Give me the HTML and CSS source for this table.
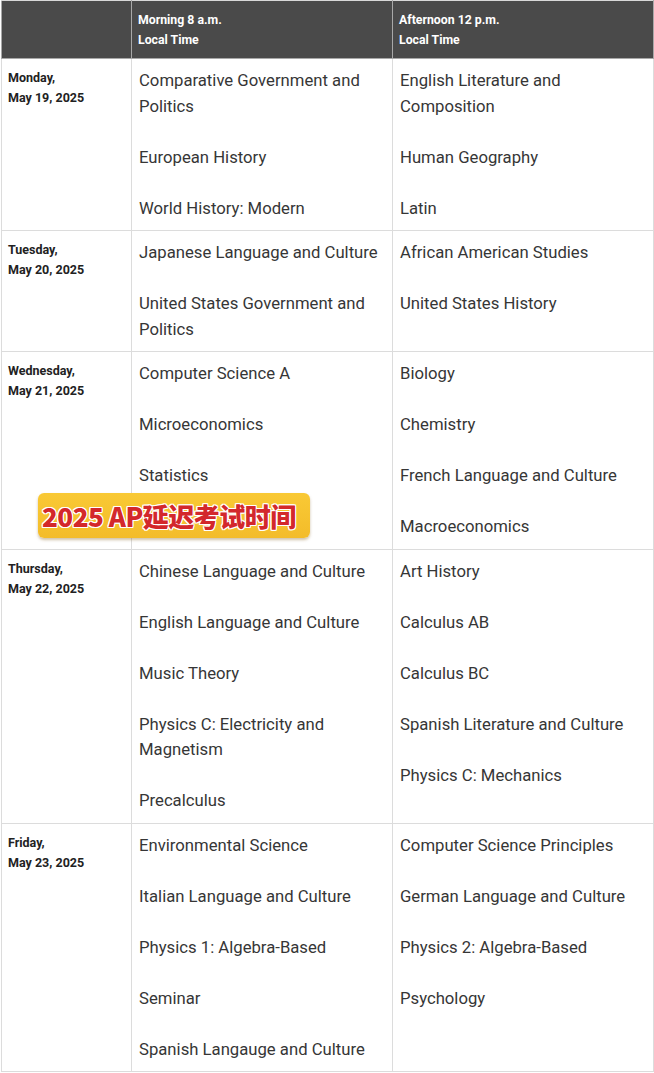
FILE: index.html
```html
<!DOCTYPE html>
<html>
<head>
<meta charset="utf-8">
<link rel="stylesheet" href="styles.css">
</head>
<body>
<div class="wrap">
<table class="sched">
  <colgroup><col class="c-date"><col class="c-am"><col class="c-pm"></colgroup>
  <thead>
    <tr>
      <th></th>
      <th>Morning 8 a.m.<br>Local Time</th>
      <th>Afternoon 12 p.m.<br>Local Time</th>
    </tr>
  </thead>
  <tbody>
    <tr>
      <td class="date">Monday,<br>May 19, 2025</td>
      <td><p>Comparative Government and Politics</p><p>European History</p><p>World History: Modern</p></td>
      <td><p>English Literature and Composition</p><p>Human Geography</p><p>Latin</p></td>
    </tr>
    <tr>
      <td class="date">Tuesday,<br>May 20, 2025</td>
      <td><p>Japanese Language and Culture</p><p>United States Government and Politics</p></td>
      <td><p>African American Studies</p><p>United States History</p></td>
    </tr>
    <tr>
      <td class="date">Wednesday,<br>May 21, 2025</td>
      <td><p>Computer Science A</p><p>Microeconomics</p><p>Statistics</p></td>
      <td><p>Biology</p><p>Chemistry</p><p>French Language and Culture</p><p>Macroeconomics</p></td>
    </tr>
    <tr>
      <td class="date">Thursday,<br>May 22, 2025</td>
      <td><p>Chinese Language and Culture</p><p>English Language and Culture</p><p>Music Theory</p><p>Physics C: Electricity and Magnetism</p><p>Precalculus</p></td>
      <td><p>Art History</p><p>Calculus AB</p><p>Calculus BC</p><p>Spanish Literature and Culture</p><p>Physics C: Mechanics</p></td>
    </tr>
    <tr>
      <td class="date">Friday,<br>May 23, 2025</td>
      <td><p>Environmental Science</p><p>Italian Language and Culture</p><p>Physics 1: Algebra-Based</p><p>Seminar</p><p>Spanish Langauge and Culture</p></td>
      <td><p>Computer Science Principles</p><p>German Language and Culture</p><p>Physics 2: Algebra-Based</p><p>Psychology</p></td>
    </tr>
  </tbody>
</table>
<div class="badge">2025 AP延迟考试时间</div>
</div>
</body>
</html>
```

FILE: styles.css
```css
html, body {
  margin: 0;
  padding: 0;
  background: #fff;
}
body {
  font-family: Roboto, "Liberation Sans", sans-serif;
  color: #363636;
}
.wrap {
  position: relative;
  padding: 0 0 0 1px;
  width: 653px;
}
.sched {
  border-collapse: collapse;
  width: 652px;
  table-layout: fixed;
}
.c-date { width: 130px; }
.c-am { width: 261px; }
.c-pm { width: 261px; }
.sched th, .sched td {
  border: 1px solid #dcdcdc;
  vertical-align: top;
  text-align: left;
}
.sched th {
  background: #4a4a4a;
  color: #fff;
  font-size: 12.3px;
  font-weight: 700;
  line-height: 20px;
  padding: 9px 6px 8px;
  border-color: #a8a8a8;
  border-top-color: #d8d8d8;
}
.sched td {
  font-size: 16.7px;
  line-height: 25.5px;
  padding: 9px 7px 9px;
}
.sched td.date {
  font-size: 12.5px;
  font-weight: 700;
  line-height: 20px;
  color: #222;
  padding-left: 6px;
}
.sched td p {
  margin: 0 0 25.5px;
}
.sched td p:last-child {
  margin-bottom: 0;
}
.badge {
  position: absolute;
  left: 38px;
  top: 493px;
  width: 272px;
  height: 45px;
  box-sizing: border-box;
  padding-left: 4px;
  background: linear-gradient(#f9c935, #f3bc2a);
  border-radius: 6px;
  box-shadow: 0 2px 3px rgba(120, 80, 0, 0.35);
  font-family: "Noto Sans CJK SC", "Noto Sans", sans-serif;
  font-weight: 900;
  font-size: 26px;
  line-height: 45px;
  letter-spacing: -0.5px;
  color: #d3282b;
  white-space: nowrap;
  text-shadow:
    1px 0 0 #fff, -1px 0 0 #fff, 0 1px 0 #fff, 0 -1px 0 #fff,
    1px 1px 0 #fff, -1px -1px 0 #fff, 1px -1px 0 #fff, -1px 1px 0 #fff;
}
```
